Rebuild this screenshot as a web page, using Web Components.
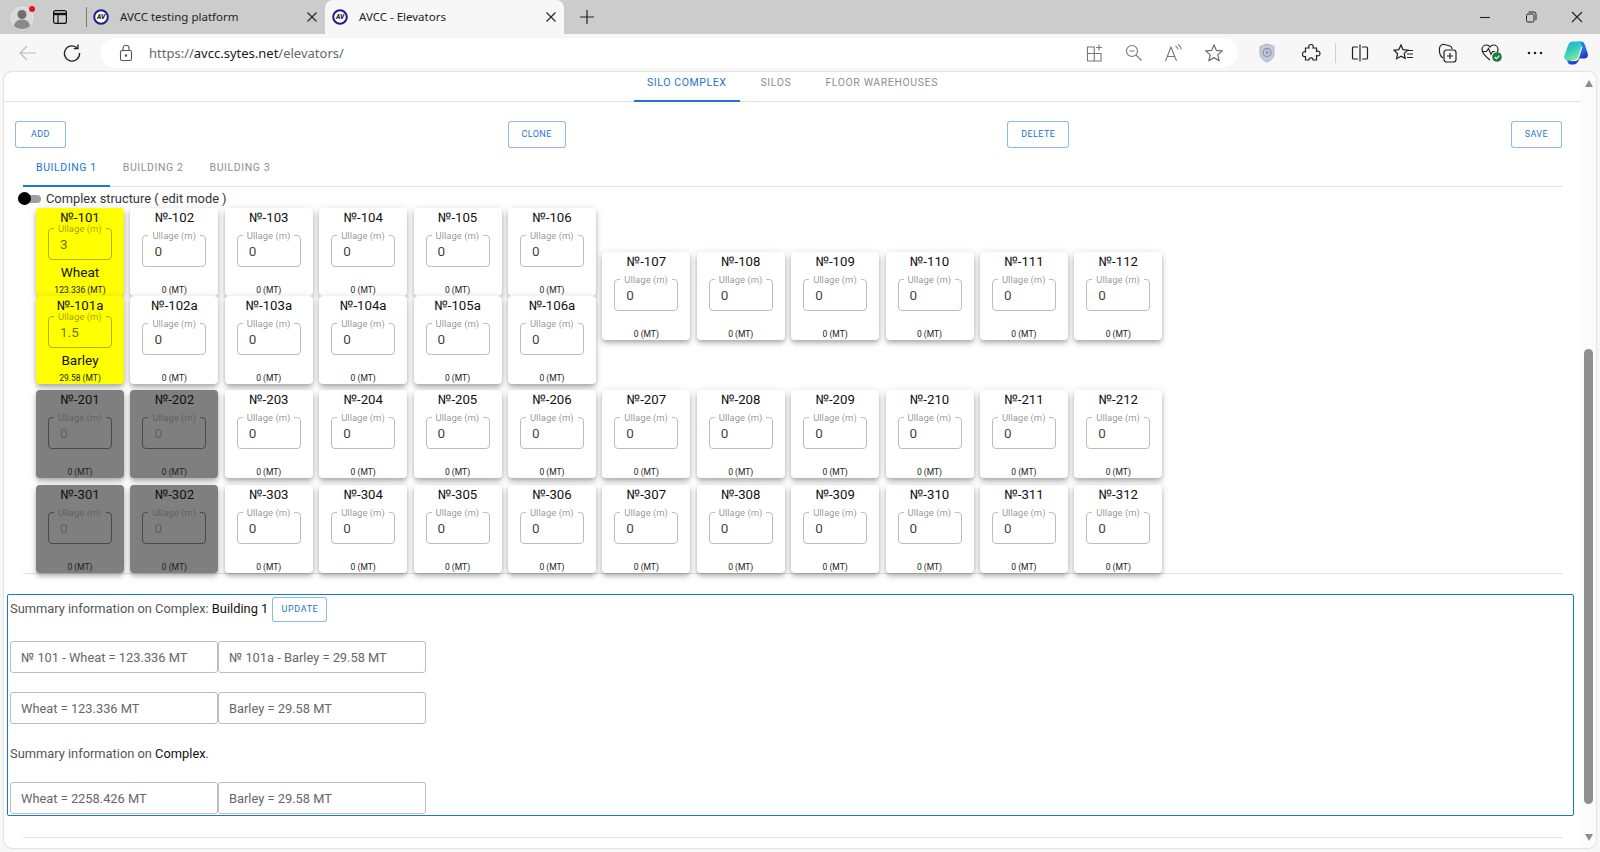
<!DOCTYPE html>
<html lang="en">
<head>
<meta charset="utf-8">
<title>AVCC - Elevators</title>
<style>
    html, body { margin: 0; height: 100%; overflow: hidden; background: #f7f7f7; }
    browser-frame { height: 852px; }
</style>
</head>
<body>
<browser-frame>
    <silo-page>
        <nav-tabs slot="top" centered>
            <nav-tab active>SILO COMPLEX</nav-tab>
            <nav-tab>SILOS</nav-tab>
            <nav-tab>FLOOR WAREHOUSES</nav-tab>
        </nav-tabs>
        <action-bar>
            <outline-btn>ADD</outline-btn>
            <outline-btn>CLONE</outline-btn>
            <outline-btn>DELETE</outline-btn>
            <outline-btn>SAVE</outline-btn>
        </action-bar>
        <nav-tabs inset>
            <nav-tab active>BUILDING 1</nav-tab>
            <nav-tab>BUILDING 2</nav-tab>
            <nav-tab>BUILDING 3</nav-tab>
        </nav-tabs>
        <edit-toggle>Complex structure ( edit mode )</edit-toggle>
        <silo-plan></silo-plan>
        <summary-panel>
            <summary-heading>Summary information on Complex: <b>Building 1</b> <outline-btn slot="action">UPDATE</outline-btn></summary-heading>
            <stat-row gap="19">
                <stat-cell>№ 101 - Wheat = 123.336 MT</stat-cell>
                <stat-cell>№ 101a - Barley = 29.58 MT</stat-cell>
            </stat-row>
            <stat-row gap="19">
                <stat-cell>Wheat = 123.336 MT</stat-cell>
                <stat-cell>Barley = 29.58 MT</stat-cell>
            </stat-row>
            <summary-heading plain>Summary information on <b>Complex</b>.</summary-heading>
            <stat-row gap="18">
                <stat-cell>Wheat = 2258.426 MT</stat-cell>
                <stat-cell>Barley = 29.58 MT</stat-cell>
            </stat-row>
        </summary-panel>
    </silo-page>
</browser-frame>

<script>
const favicon = `<svg width="16" height="16" viewBox="0 0 16 16">
    <circle cx="8" cy="8" r="6.8" fill="#fff" stroke="#1c1c8c" stroke-width="2"/>
    <text x="8" y="10.2" text-anchor="middle" font-family="Roboto, sans-serif" font-size="6.5" font-weight="900" font-style="italic" fill="#222">AV</text>
</svg>`;

const closeIcon = `<svg width="12" height="12" viewBox="0 0 12 12"><path d="M1.5 1.5l9 9M10.5 1.5l-9 9" stroke="#222" stroke-width="1.1" fill="none"/></svg>`;

const browserIcons = {
    back: `<svg width="20" height="20" viewBox="0 0 20 20" fill="none" stroke="#bcbcbc" stroke-width="1.2"><path d="M18 10H2M9 3l-7 7 7 7"/></svg>`,
    reload: `<svg width="20" height="20" viewBox="0 0 20 20" fill="none" stroke="#222" stroke-width="1.3"><path d="M15.5 5.2A7.6 7.6 0 1 0 17.6 10"/><path d="M16 1.5v4.2h-4.2"/></svg>`,
    lock: `<svg width="16" height="18" viewBox="0 0 16 18" fill="none" stroke="#555" stroke-width="1.1"><rect x="2.5" y="6.5" width="11" height="10" rx="1.5"/><path d="M5 6.5V4.2a3 3 0 0 1 6 0v2.3"/><circle cx="8" cy="11.5" r=".7" fill="#555"/></svg>`,
    apps: `<svg width="20" height="20" viewBox="0 0 20 20" fill="none" stroke="#777" stroke-width="1.1"><path d="M11 4H3.500v14H17v-7.500H3.500M10.300 4v14"/><path d="M15 1.500v6M12 4.500h6"/></svg>`,
    zoom: `<svg width="20" height="20" viewBox="0 0 20 20" fill="none" stroke="#777" stroke-width="1.1"><circle cx="8" cy="8" r="5.500"/><path d="M12 12l5.500 5.500M5.500 8h5"/></svg>`,
    read: `<svg width="22" height="20" viewBox="0 0 22 20" fill="none" stroke="#777" stroke-width="1.1"><path d="M2.500 18L8 4l5.500 14M4.400 13.500h7.200"/><path d="M12.500 3c1.300.8 2.200 2 2.500 3.500M15 1.500c1.800 1 3 2.800 3.300 4.800"/></svg>`,
    star: `<svg width="20" height="20" viewBox="0 0 20 20" fill="none" stroke="#666" stroke-width="1.1"><path d="M10 2l2.400 5.400 5.800.6-4.400 3.900 1.300 5.700L10 14.700l-5.100 2.900 1.300-5.700L1.800 8l5.800-.6z"/></svg>`,
    shield: `<svg width="18" height="20" viewBox="0 0 18 20"><path d="M9 1l7 2.500v6.500c0 4.500-3 7.500-7 9-4-1.500-7-4.500-7-9V3.500z" fill="#c3cbdc" stroke="#a9b3c8"/><circle cx="9" cy="9.500" r="4" fill="none" stroke="#8a94a8" stroke-width="1.300"/><circle cx="9" cy="9.500" r="1.500" fill="#8a94a8"/></svg>`,
    puzzle: `<svg width="20" height="20" viewBox="0 0 20 20" fill="none" stroke="#222" stroke-width="1.200"><path d="M4.500 5H8c-.8-2 .2-3.500 2-3.500S12.800 3 12 5h3.500v3.500c2-.8 3.500.2 3.500 2s-1.500 2.800-3.500 2V17H12c.3-1.300-.6-2.200-2-2.200S7.700 15.700 8 17H4.500v-3.500C2.800 14 1.500 13 1.500 11.200S2.800 8.300 4.500 8.800z"/></svg>`,
    split: `<svg width="20" height="20" viewBox="0 0 20 20" fill="none" stroke="#222" stroke-width="1.200"><path d="M8 4H3.500a1 1 0 0 0-1 1v10a1 1 0 0 0 1 1H8M12 4h4.500a1 1 0 0 1 1 1v10a1 1 0 0 1-1 1H12M10 1.500v17"/></svg>`,
    favorites: `<svg width="22" height="20" viewBox="0 0 22 20" fill="none" stroke="#222" stroke-width="1.200"><path d="M8 2l2 4.600 4.800.6-3.600 3.200 1 5L8 13.200l-4.400 2.500 1-5L1 7.200l4.800-.6z"/><path d="M14 7.500h6M14 11h6M14 14.500h6"/></svg>`,
    collections: `<svg width="22" height="22" viewBox="0 0 22 22" fill="none" stroke="#222" stroke-width="1.200"><path d="M6 16C3 14 2 10 2.500 6 3 3.500 5 2 7.500 2.500L13 4c1.500.4 2 1.500 2 3"/><rect x="7" y="8" width="12" height="12" rx="2.500" fill="#f7f7f7"/><path d="M13 11v6M10 14h6"/></svg>`,
    health: `<svg width="24" height="22" viewBox="0 0 24 22" fill="none"><path d="M10 18C5 14 2 11 2 7.500 2 5 4 3 6.500 3 8 3 9.300 3.800 10 5c.7-1.200 2-2 3.500-2C16 3 18 5 18 7.500c0 1-.3 2-.8 3" stroke="#222" stroke-width="1.200"/><path d="M2.500 9.500h4l2-3 2.500 6 1.500-3h2.500" stroke="#222" stroke-width="1.100"/><circle cx="17" cy="15" r="4.800" fill="#1a7f37"/><path d="M14.700 15l1.700 1.700 3-3" stroke="#fff" stroke-width="1.200"/></svg>`,
    dots: `<svg width="20" height="20" viewBox="0 0 20 20" fill="#222"><circle cx="4" cy="10" r="1.300"/><circle cx="10" cy="10" r="1.300"/><circle cx="16" cy="10" r="1.300"/></svg>`,
    copilot: `<svg width="24" height="24" viewBox="0 0 24 24">
        <defs>
            <linearGradient id="cpA" x1="0" y1="0" x2=".5" y2="1"><stop offset="0" stop-color="#2a9fe8"/><stop offset=".55" stop-color="#2fd0c0"/><stop offset="1" stop-color="#8be58a"/></linearGradient>
            <linearGradient id="cpB" x1=".3" y1="0" x2=".7" y2="1"><stop offset="0" stop-color="#1c7fe8"/><stop offset=".5" stop-color="#2b6ef0"/><stop offset="1" stop-color="#1c2fb5"/></linearGradient>
        </defs>
        <path d="M14 .5h3c2 0 3 1 4 3.500l2.700 8.500c.8 3-1 5-3.700 5h-6l2.500-11C17 4 16 1.500 14 .5z" fill="url(#cpB)"/>
        <path d="M9 23.500H7c-2 0-3-1-3.800-3.500L2.800 18h8.700l4.500-6-.8 6c-.7 3.500-3 5.500-6.200 5.500z" fill="url(#cpB)"/>
        <path d="M9 .5h5.500c2.500 0 3.500 2 3 4.500l-3 11.500c-.5 2-2 3-4 3H4c-3 0-4.500-2-3.500-5L4 4.500C4.800 2 6.500.5 9 .5z" fill="url(#cpA)"/>
        <path d="M18 5.500l-3.500 11c-.5 2-2 3-4 3H7" fill="none" stroke="#fff" stroke-width="1.200" stroke-opacity=".9"/>
    </svg>`
};

const frameTemplate = document.createElement('template');
frameTemplate.innerHTML = `
<style>
    :host { display: flex; flex-direction: column; background: #f7f7f7; font-family: "Noto Sans", "Open Sans", sans-serif; }
    .strip { display: flex; align-items: flex-end; height: 34px; background: #cccccc; flex: none; }
    .profile { width: 26px; height: 26px; margin: 0 0 4px 10px; flex: none; }
    .panel { margin: 0 0 10px 17px; width: 14px; height: 14px; flex: none; }
    .sep { width: 1px; height: 20px; background: #777; margin: 0 0 7px 19px; flex: none; }
    .new { margin: 0 0 10px 16px; width: 14px; height: 14px; flex: none; }
    .win { margin-left: auto; display: flex; align-self: stretch; }
    .win span { width: 46px; display: flex; align-items: center; justify-content: center; }
    .toolbar { display: flex; align-items: center; height: 37px; flex: none; padding-top: 1px; box-sizing: border-box; }
    .nav { width: 44px; display: flex; justify-content: center; flex: none; }
    .nav:first-child { width: 50px; padding-left: 6px; box-sizing: border-box; }
    .address { display: flex; align-items: center; width: 1138px; height: 30px; margin-left: 6px; background: #fff; border-radius: 15px; flex: none; box-shadow: 0 0 1px rgba(0,0,0,.06); }
    .lock { margin-left: 18px; width: 16px; height: 18px; flex: none; }
    .url { margin-left: 15px; font-size: 13px; color: #666; white-space: nowrap; }
    .url b { font-weight: 400; color: #1a1a1a; }
    .inner { margin-left: auto; display: flex; padding-right: 4px; }
    .inner span { width: 40px; display: flex; justify-content: center; align-items: center; }
    .outer { display: flex; align-items: center; margin-left: 7px; }
    .outer span { width: 44px; display: flex; justify-content: center; align-items: center; }
    .outer i { width: 1px; height: 20px; background: #d0d0d0; margin: 0 2px; }
    .stage { flex: 1; min-height: 0; padding: 1px 4px 4px; display: flex; }
</style>
<div class="strip">
    <svg class="profile" viewBox="0 0 26 26">
        <circle cx="12" cy="14" r="11" fill="#d9d9d9" stroke="#e6e6e6"/>
        <circle cx="12" cy="10.500" r="4.500" fill="#6e6e6e"/>
        <path d="M4 22c1-5 4-6.500 8-6.500s7 1.500 8 6.500c-2 1.800-5 3-8 3s-6-1.200-8-3z" fill="#8a8a8a"/>
        <circle cx="22" cy="5" r="3" fill="#e81123"/>
    </svg>
    <svg class="panel" viewBox="0 0 14 14" fill="none" stroke="#111" stroke-width="1.200"><rect x=".6" y=".6" width="12.800" height="12.800" rx="2"/><path d="M.6 4h12.800" stroke-width="2.400"/><path d="M5 4v9.400"/></svg>
    <span class="sep"></span>
    <browser-tab>AVCC testing platform</browser-tab>
    <browser-tab active>AVCC - Elevators</browser-tab>
    <svg class="new" viewBox="0 0 14 14" fill="none" stroke="#222" stroke-width="1.200"><path d="M7 0v14M0 7h14"/></svg>
    <div class="win">
        <span><svg width="12" height="12" viewBox="0 0 12 12"><path d="M1 6.500h10" stroke="#222" stroke-width="1.100"/></svg></span>
        <span><svg width="12" height="12" viewBox="0 0 12 12" fill="none" stroke="#222" stroke-width="1"><rect x="1.500" y="3" width="7.500" height="8" rx="1.500"/><path d="M3.500 1h5.500a2 2 0 0 1 2 2v6"/></svg></span>
        <span><svg width="12" height="12" viewBox="0 0 12 12"><path d="M1 1l10 10M11 1L1 11" stroke="#222" stroke-width="1.100"/></svg></span>
    </div>
</div>
<div class="toolbar">
    <span class="nav">${browserIcons.back}</span>
    <span class="nav">${browserIcons.reload}</span>
    <div class="address">
        <span class="lock">${browserIcons.lock}</span>
        <span class="url">https://<b>avcc.sytes.net</b>/elevators/</span>
        <div class="inner">
            <span>${browserIcons.apps}</span>
            <span>${browserIcons.zoom}</span>
            <span>${browserIcons.read}</span>
            <span>${browserIcons.star}</span>
        </div>
    </div>
    <div class="outer">
        <span>${browserIcons.shield}</span>
        <span>${browserIcons.puzzle}</span>
        <i></i>
        <span>${browserIcons.split}</span>
        <span>${browserIcons.favorites}</span>
        <span>${browserIcons.collections}</span>
        <span>${browserIcons.health}</span>
        <span style="width:41px">${browserIcons.dots}</span>
        <span style="width:42px">${browserIcons.copilot}</span>
    </div>
</div>
<div class="stage"><slot></slot></div>`;

class BrowserFrame extends HTMLElement {
    constructor() {
        super();
        this.attachShadow({ mode: 'open' });
        this.shadowRoot.appendChild(frameTemplate.content.cloneNode(true));
    }
}
window.customElements.define('browser-frame', BrowserFrame);

const browserTabTemplate = document.createElement('template');
browserTabTemplate.innerHTML = `
<style>
    :host { display: flex; align-items: center; box-sizing: border-box; width: 238px; height: 34px; padding: 0 7px 1px 6px; font-size: 11.500px; color: #222; }
    :host([active]) { width: 239px; background: #f7f7f7; border-radius: 8px 8px 0 0; padding-left: 7px; }
    .icon { width: 16px; height: 16px; flex: none; }
    .title { margin-left: 11px; flex: 1; white-space: nowrap; }
    .close { width: 12px; height: 12px; flex: none; }
</style>
<span class="icon">${favicon}</span>
<span class="title"><slot></slot></span>
<span class="close">${closeIcon}</span>`;

class BrowserTab extends HTMLElement {
    constructor() {
        super();
        this.attachShadow({ mode: 'open' });
        this.shadowRoot.appendChild(browserTabTemplate.content.cloneNode(true));
    }
}
window.customElements.define('browser-tab', BrowserTab);

const pageTemplate = document.createElement('template');
pageTemplate.innerHTML = `
<style>
    :host { display: flex; flex: 1; background: #fff; border-radius: 8px; box-shadow: 0 0 2px rgba(0,0,0,.28); overflow: hidden; font-family: Roboto, "Liberation Sans", sans-serif; }
    .content { flex: 1; min-width: 0; display: flex; flex-direction: column; }
    .rail { width: 15px; flex: none; background: #fbfbfb; display: flex; flex-direction: column; align-items: center; padding: 8px 3px 7px; box-sizing: border-box; }
    .up, .down { width: 0; height: 0; border-left: 4.500px solid transparent; border-right: 4.500px solid transparent; flex: none; }
    .up { border-bottom: 7px solid #8c8c8c; }
    .down { border-top: 7px solid #8c8c8c; }
    .thumb { width: 9px; height: 455px; margin-top: 262px; border-radius: 4.500px; background: #8f8f8f; flex: none; }
    .fill { flex: 1; }
    .foot-rule { height: 1px; margin: 21px 19px 0; background: #e0e0e0; }
</style>
<div class="content">
    <slot name="top"></slot>
    <slot></slot>
    <div class="foot-rule"></div>
</div>
<div class="rail">
    <span class="up"></span>
    <span class="thumb"></span>
    <span class="fill"></span>
    <span class="down"></span>
</div>`;

class SiloPage extends HTMLElement {
    constructor() {
        super();
        this.attachShadow({ mode: 'open' });
        this.shadowRoot.appendChild(pageTemplate.content.cloneNode(true));
    }
}
window.customElements.define('silo-page', SiloPage);

const navTabsTemplate = document.createElement('template');
navTabsTemplate.innerHTML = `
<style>
    :host { display: flex; box-sizing: border-box; height: 30px; border-bottom: 1px solid #e0e0e0; --tab-pad: 0 13px 8px; }
    :host([centered]) { justify-content: center; gap: 8px; }
    :host([inset]) { height: 39px; margin: 0 19px; --tab-pad: 2px 13px 0; }
</style>
<slot></slot>`;

class NavTabs extends HTMLElement {
    constructor() {
        super();
        this.attachShadow({ mode: 'open' });
        this.shadowRoot.appendChild(navTabsTemplate.content.cloneNode(true));
    }
}
window.customElements.define('nav-tabs', NavTabs);

const navTabTemplate = document.createElement('template');
navTabTemplate.innerHTML = `
<style>
    :host { display: flex; align-items: center; box-sizing: border-box; height: calc(100% + 1px); padding: var(--tab-pad); font-size: 10.500px; letter-spacing: .6px; color: #909090; white-space: nowrap; border-bottom: 2px solid transparent; }
    :host([active]) { color: #1976d2; border-bottom-color: #1976d2; }
</style>
<slot></slot>`;

class NavTab extends HTMLElement {
    constructor() {
        super();
        this.attachShadow({ mode: 'open' });
        this.shadowRoot.appendChild(navTabTemplate.content.cloneNode(true));
    }
}
window.customElements.define('nav-tab', NavTab);

const actionBarTemplate = document.createElement('template');
actionBarTemplate.innerHTML = `
<style>
    :host { display: flex; justify-content: space-between; margin: 19px 19px 0 11px; }
</style>
<slot></slot>`;

class ActionBar extends HTMLElement {
    constructor() {
        super();
        this.attachShadow({ mode: 'open' });
        this.shadowRoot.appendChild(actionBarTemplate.content.cloneNode(true));
    }
}
window.customElements.define('action-bar', ActionBar);

const buttonTemplate = document.createElement('template');
buttonTemplate.innerHTML = `
<style>
    :host { display: inline-flex; align-items: center; justify-content: center; box-sizing: border-box; height: 27px; padding: 0 13px 1px; min-width: 51px; border: 1px solid rgba(25,118,210,.5); border-radius: 3px; font-size: 9px; font-weight: 400; letter-spacing: .4px; color: #1976d2; white-space: nowrap; background: #fff; }
    :host([slot="action"]) { height: 25px; padding: 0 7px 1px; min-width: 55px; letter-spacing: .6px; }
</style>
<slot></slot>`;

class OutlineBtn extends HTMLElement {
    constructor() {
        super();
        this.attachShadow({ mode: 'open' });
        this.shadowRoot.appendChild(buttonTemplate.content.cloneNode(true));
    }
}
window.customElements.define('outline-btn', OutlineBtn);

const toggleTemplate = document.createElement('template');
toggleTemplate.innerHTML = `
<style>
    :host { display: flex; align-items: center; box-sizing: border-box; height: 21px; padding: 2px 0 0 14px; font-size: 12.850px; color: #333; }
    .track { position: relative; width: 23px; height: 8px; border-radius: 4px; background: #9e9e9e; margin-right: 5px; flex: none; }
    .knob { position: absolute; left: 0; top: -2.500px; width: 13px; height: 13px; border-radius: 50%; background: #000; }
</style>
<span class="track"><span class="knob"></span></span>
<slot></slot>`;

class EditToggle extends HTMLElement {
    constructor() {
        super();
        this.attachShadow({ mode: 'open' });
        this.shadowRoot.appendChild(toggleTemplate.content.cloneNode(true));
    }
}
window.customElements.define('edit-toggle', EditToggle);

const cardTemplate = document.createElement('template');
cardTemplate.innerHTML = `
<style>
    :host { display: flex; flex-direction: column; align-items: center; box-sizing: border-box; width: 88px; height: 88px; background: #fff; border-radius: 4px; box-shadow: 0 2px 4px -1px rgba(0,0,0,.2), 0 4px 5px rgba(0,0,0,.14), 0 1px 10px rgba(0,0,0,.12); color: #111; --label: rgba(0,0,0,.45); --value: rgba(0,0,0,.78); --line: #bdbdbd; }
    :host([tone="crop"]) { background: #ffff00; --label: rgba(0,0,0,.4); --value: rgba(0,0,0,.6); --line: rgba(0,0,0,.3); }
    :host([tone="off"]) { background: #7f7f7f; --label: rgba(0,0,0,.28); --value: rgba(0,0,0,.28); --line: rgba(0,0,0,.42); }
    .name { font-size: 13.200px; line-height: 20px; height: 20px; flex: none; }
    fieldset { box-sizing: border-box; width: 64px; min-width: 0; height: 37px; margin: 2px 0 0; padding: 0 0 0 11px; border: 1px solid var(--line); border-radius: 4px; flex: none; }
    :host([tone="crop"]) fieldset { margin-top: -5px; }
    legend { margin-left: -6px; padding: 0 4px; font-size: 9.500px; line-height: 11px; color: var(--label); white-space: nowrap; }
    .value { display: block; font-size: 13.500px; line-height: 20px; color: var(--value); }
    .crop { font-size: 13.500px; line-height: 18px; margin-top: 3px; display: none; }
    :host([tone="crop"]) .crop { display: block; }
    .mass { margin-top: auto; font-size: 8.500px; line-height: 11px; color: #222; white-space: nowrap; }
</style>
<span class="name"><slot></slot></span>
<fieldset><legend>Ullage (m)</legend><span class="value"></span></fieldset>
<span class="crop"></span>
<span class="mass"></span>`;

class SiloCard extends HTMLElement {
    constructor() {
        super();
        this.attachShadow({ mode: 'open' });
        this.shadowRoot.appendChild(cardTemplate.content.cloneNode(true));
    }
    connectedCallback() {
        this.shadowRoot.querySelector('.value').textContent = this.getAttribute('ullage') || '0';
        this.shadowRoot.querySelector('.crop').textContent = this.getAttribute('crop') || '';
        this.shadowRoot.querySelector('.mass').textContent = (this.getAttribute('mass') || '0') + ' (MT)';
    }
}
window.customElements.define('silo-card', SiloCard);

const planTemplate = document.createElement('template');
planTemplate.innerHTML = `
<style>
    :host { display: block; margin-left: 32px; }
    .top { display: flex; gap: 6.400px; align-items: center; }
    .cols { display: flex; gap: 6.400px; }
    .rows { display: flex; flex-direction: column; }
    .row2 { margin-top: 6px; }
    .row3 { margin-top: 7px; }
    .rule { height: 1px; background: #e0e0e0; margin: 0 19px 0 -13px; }
</style>
<div class="top">
    <div class="rows">
        <div class="cols" id="a"></div>
        <div class="cols" id="b"></div>
    </div>
    <div class="cols" id="c"></div>
</div>
<div class="cols row2" id="d"></div>
<div class="cols row3" id="e"></div>
<div class="rule"></div>`;

function siloCard(name, opts) {
    const card = document.createElement('silo-card');
    card.textContent = '№-' + name;
    Object.keys(opts || {}).forEach(k => card.setAttribute(k, opts[k]));
    return card;
}

class SiloPlan extends HTMLElement {
    constructor() {
        super();
        this.attachShadow({ mode: 'open' });
        this.shadowRoot.appendChild(planTemplate.content.cloneNode(true));
        const root = this.shadowRoot;
        const fill = (id, from, to, suffix, special) => {
            for (let n = from; n <= to; n++) {
                root.getElementById(id).appendChild(siloCard(n + suffix, special && special[n]));
            }
        };
        fill('a', 101, 106, '', { 101: { tone: 'crop', ullage: '3', crop: 'Wheat', mass: '123.336' } });
        fill('b', 101, 106, 'a', { 101: { tone: 'crop', ullage: '1.5', crop: 'Barley', mass: '29.58' } });
        fill('c', 107, 112, '');
        fill('d', 201, 212, '', { 201: { tone: 'off' }, 202: { tone: 'off' } });
        fill('e', 301, 312, '', { 301: { tone: 'off' }, 302: { tone: 'off' } });
    }
}
window.customElements.define('silo-plan', SiloPlan);

const summaryTemplate = document.createElement('template');
summaryTemplate.innerHTML = `
<style>
    :host { display: block; box-sizing: border-box; height: 222px; margin: 20px 7px 0 3px; padding: 2px 2px 1px; border: 1px solid #1976d2; border-radius: 2px; font-size: 12.850px; color: #555; }
</style>
<slot></slot>`;

class SummaryPanel extends HTMLElement {
    constructor() {
        super();
        this.attachShadow({ mode: 'open' });
        this.shadowRoot.appendChild(summaryTemplate.content.cloneNode(true));
    }
}
window.customElements.define('summary-panel', SummaryPanel);

const headingTemplate = document.createElement('template');
headingTemplate.innerHTML = `
<style>
    :host { display: flex; align-items: center; height: 25px; white-space: pre; }
    :host([plain]) { box-sizing: border-box; height: 20px; margin-top: 20px; }
    ::slotted(b) { font-weight: 400; color: #111; }
    .text { margin-bottom: 2px; }
    .action { margin-left: 1px; display: flex; }
</style>
<span class="text"><slot></slot></span>
<span class="action"><slot name="action"></slot></span>`;

class SummaryHeading extends HTMLElement {
    constructor() {
        super();
        this.attachShadow({ mode: 'open' });
        this.shadowRoot.appendChild(headingTemplate.content.cloneNode(true));
    }
}
window.customElements.define('summary-heading', SummaryHeading);

const statRowTemplate = document.createElement('template');
statRowTemplate.innerHTML = `
<style>
    :host { display: flex; }
</style>
<slot></slot>`;

class StatRow extends HTMLElement {
    constructor() {
        super();
        this.attachShadow({ mode: 'open' });
        this.shadowRoot.appendChild(statRowTemplate.content.cloneNode(true));
    }
    connectedCallback() {
        this.style.marginTop = this.getAttribute('gap') + 'px';
    }
}
window.customElements.define('stat-row', StatRow);

const statCellTemplate = document.createElement('template');
statCellTemplate.innerHTML = `
<style>
    :host { display: flex; align-items: center; box-sizing: border-box; width: 208px; height: 32px; padding: 0 10px; border: 1px solid #bdbdbd; border-radius: 3px; font-size: 12.850px; color: #666; white-space: nowrap; }
</style>
<slot></slot>`;

class StatCell extends HTMLElement {
    constructor() {
        super();
        this.attachShadow({ mode: 'open' });
        this.shadowRoot.appendChild(statCellTemplate.content.cloneNode(true));
    }
}
window.customElements.define('stat-cell', StatCell);
</script>
</body>
</html>
